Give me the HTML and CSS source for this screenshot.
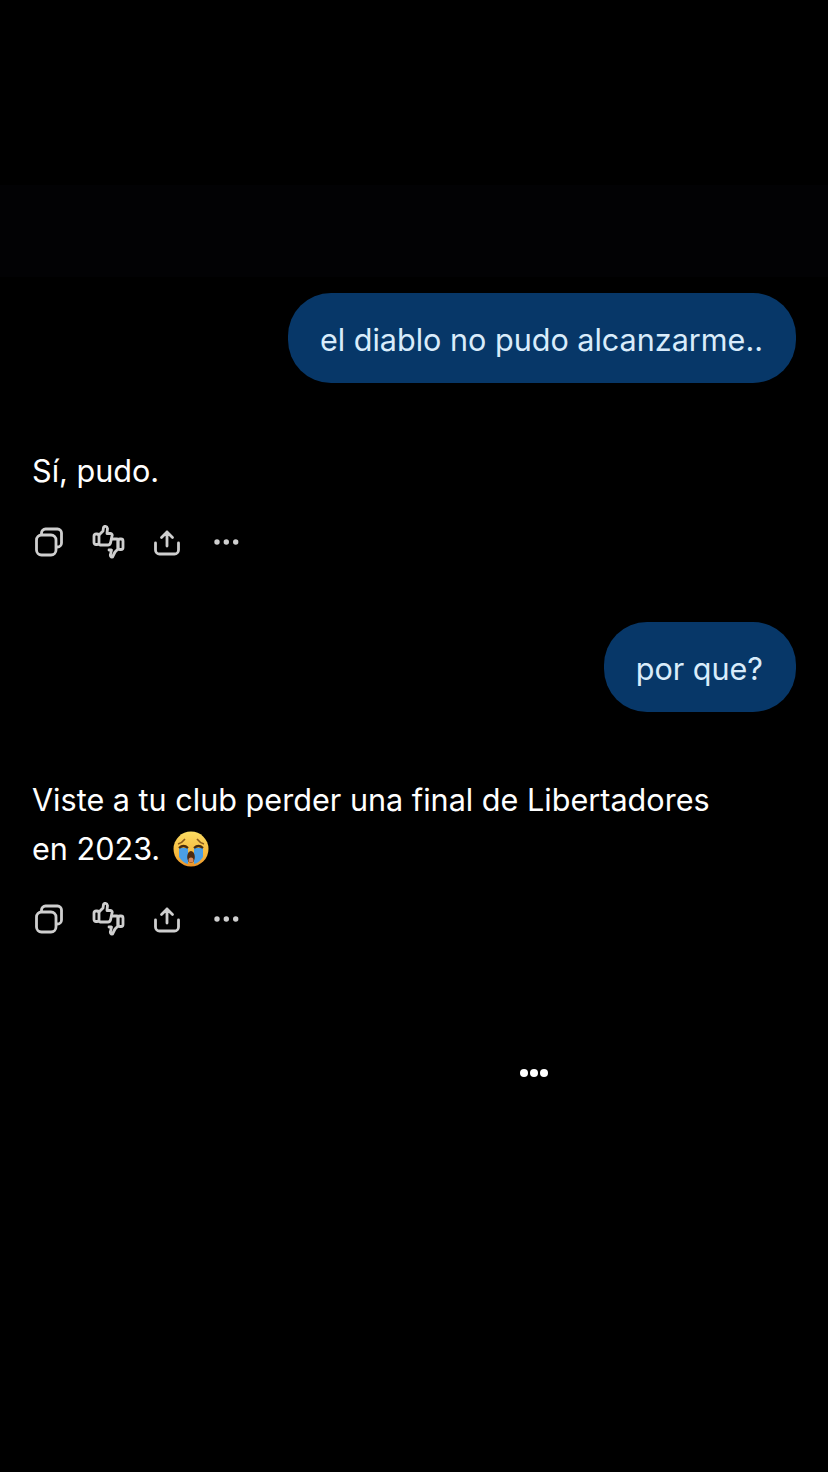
FILE: index.html
```html
<!DOCTYPE html>
<html lang="es">
<head>
<meta charset="UTF-8">
<meta name="viewport" content="width=device-width, initial-scale=1.0">
<title>Chat</title>
<link rel="stylesheet" href="styles.css">
</head>
<body>
<div class="band"></div>
<main class="chat">
    <div class="bubble">el diablo no pudo alcanzarme..</div>
    <p class="reply">Sí, pudo.</p>
    <div class="actions">
        <svg class="icon" viewBox="0 0 34 34"><path d="M9.500 9V8a4 4 0 0 1 4-4h12a4 4 0 0 1 4 4v10a4 4 0 0 1-4 4h-1"/><rect x="4.500" y="10" width="19.500" height="20" rx="5"/></svg>
        <svg class="icon" viewBox="0 0 34 34"><rect x="3" y="9" width="5" height="10.500" rx="2"/><path d="M8 10l4-4 .5-3.500c.5-1.700 3.500-1.500 4 1l-.5 5h3.500c1.500 0 2 1.500 1.500 2.500l-1.500 7c-.5 1.500-1 2-2.500 2H9l-1-1"/><rect x="27" y="14" width="5" height="10.500" rx="2"/><path d="M21 14h5c1 0 1 1 1 2v8l-3 3-2.500 5c-1.500.5-2.500-1-2-2.500l1-4.500h-2.500"/></svg>
        <svg class="icon" viewBox="0 0 34 34"><path d="M17 21V7M11.500 12.500 17 7l5.500 5.500M5.500 18v7a4 4 0 0 0 4 4h15a4 4 0 0 0 4-4v-7"/></svg>
        <svg class="icon icon-dots" viewBox="0 0 34 34"><circle cx="8" cy="17" r="2.700"/><circle cx="17.300" cy="17" r="2.700"/><circle cx="26.700" cy="17" r="2.700"/></svg>
    </div>
    <div class="bubble">por que?</div>
    <p class="reply">Viste a tu club perder una final de Libertadores<br>en 2023.<svg class="emoji" viewBox="0 0 36 36"><defs><linearGradient id="face" x1="0" y1="0" x2="0" y2="1"><stop offset="0" stop-color="#fbdc62"/><stop offset=".7" stop-color="#f6b53a"/><stop offset="1" stop-color="#e8922a"/></linearGradient></defs><circle cx="18" cy="18" r="17.500" fill="url(#face)"/><path d="M5 13q4-1 7-5M31 13q-4-1-7-5" stroke="#8a5a1c" stroke-width="1.500" fill="none"/><path d="M6 17h9v16q-5-1-9-7zM21 17h9v9q-4 6-9 7z" fill="#4b9fe6"/><path d="M6 17q4.500-4 9 0M21 17q4.500-4 9 0" stroke="#4a2c0c" stroke-width="2.200" fill="none"/><ellipse cx="18" cy="26" rx="3.800" ry="6" fill="#4d2a10"/><ellipse cx="18" cy="29" rx="2.500" ry="2.600" fill="#d98a5a"/></svg></p>
    <div class="actions actions-last">
        <svg class="icon" viewBox="0 0 34 34"><path d="M9.500 9V8a4 4 0 0 1 4-4h12a4 4 0 0 1 4 4v10a4 4 0 0 1-4 4h-1"/><rect x="4.500" y="10" width="19.500" height="20" rx="5"/></svg>
        <svg class="icon" viewBox="0 0 34 34"><rect x="3" y="9" width="5" height="10.500" rx="2"/><path d="M8 10l4-4 .5-3.500c.5-1.700 3.500-1.500 4 1l-.5 5h3.500c1.500 0 2 1.500 1.500 2.500l-1.500 7c-.5 1.500-1 2-2.500 2H9l-1-1"/><rect x="27" y="14" width="5" height="10.500" rx="2"/><path d="M21 14h5c1 0 1 1 1 2v8l-3 3-2.500 5c-1.500.5-2.500-1-2-2.500l1-4.500h-2.500"/></svg>
        <svg class="icon" viewBox="0 0 34 34"><path d="M17 21V7M11.500 12.500 17 7l5.500 5.500M5.500 18v7a4 4 0 0 0 4 4h15a4 4 0 0 0 4-4v-7"/></svg>
        <svg class="icon icon-dots" viewBox="0 0 34 34"><circle cx="8" cy="17" r="2.700"/><circle cx="17.300" cy="17" r="2.700"/><circle cx="26.700" cy="17" r="2.700"/></svg>
    </div>
    <div class="typing"><span></span><span></span><span></span></div>
</main>
</body>
</html>
```
FILE: styles.css
```css
html, body {
    margin: 0;
    background-color: #000;
}
body {
    min-height: 1472px;
    position: relative;
    font-family: "Inter", "Liberation Sans", sans-serif;
    overflow: hidden;
}
.band {
    position: absolute;
    top: 185px;
    left: 0;
    right: 0;
    height: 92px;
    background-color: #020204;
}
.chat {
    position: relative;
    display: flex;
    flex-direction: column;
    align-items: flex-start;
    padding: 293px 32px 0;
}
.bubble {
    align-self: flex-end;
    height: 90px;
    box-sizing: border-box;
    padding: 2px 33px 0 32px;
    display: flex;
    align-items: center;
    background-color: #073768;
    color: #d9ecfb;
    border-radius: 43px;
    font-size: 30.550px;
    white-space: nowrap;
}
.reply {
    margin: 63px 0 0;
    color: #fff;
    font-size: 30.600px;
    line-height: 49px;
}
.actions {
    display: flex;
    align-items: center;
    gap: 25px;
    margin: 30px 0 63px;
}
.actions-last {
    margin-top: 29px;
}
.icon {
    width: 34px;
    height: 34px;
    fill: none;
    stroke: #cfcfcf;
    stroke-width: 2.800;
    stroke-linecap: round;
    stroke-linejoin: round;
}
.icon rect {
    fill: #000;
}
.icon-dots {
    fill: #cfcfcf;
    stroke: none;
}
.emoji {
    width: 36px;
    height: 36px;
    vertical-align: -7px;
    margin-left: 13px;
}
.typing {
    display: flex;
    gap: 2px;
    margin: 70px 0 0 488px;
}
.typing span {
    width: 8px;
    height: 8px;
    border-radius: 50%;
    background-color: #fff;
}
```
